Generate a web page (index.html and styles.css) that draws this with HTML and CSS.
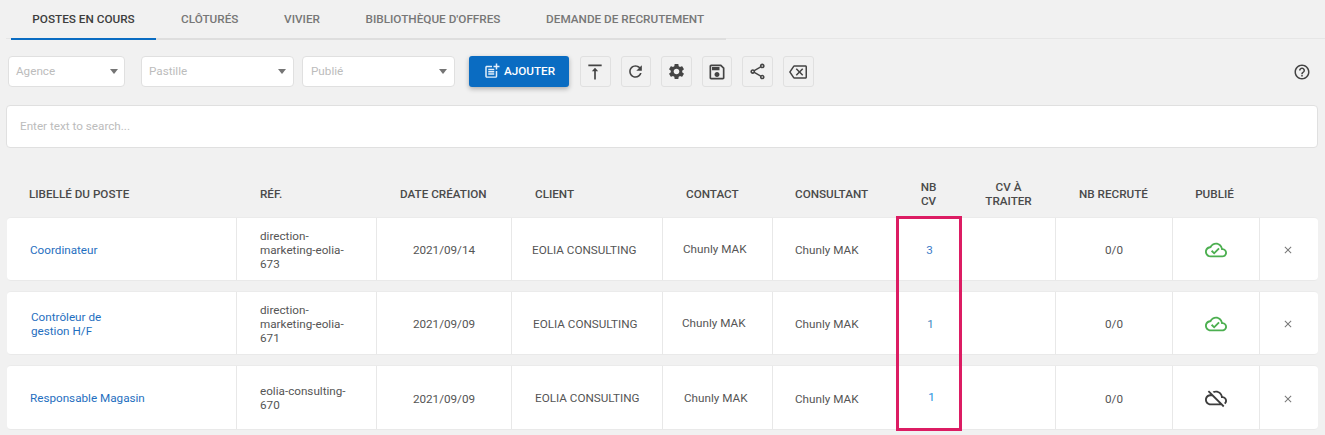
FILE: index.html
```html
<!DOCTYPE html>
<html lang="fr">
<head>
<meta charset="utf-8">
<title>Postes en cours</title>
<link rel="stylesheet" href="styles.css">
</head>
<body>
<nav class="tabs">
  <a class="tab tab-active">Postes en cours</a>
  <a class="tab">Clôturés</a>
  <a class="tab">Vivier</a>
  <a class="tab">Bibliothèque d'offres</a>
  <a class="tab">Demande de recrutement</a>
</nav>

<div class="toolbar">
  <div class="select select-agence"><span>Agence</span><i class="caret"></i></div>
  <div class="select select-pastille"><span>Pastille</span><i class="caret"></i></div>
  <div class="select select-publie"><span>Publié</span><i class="caret"></i></div>
  <button class="add">
    <svg class="add-icon" viewBox="0 0 24 24"><path d="M17 19.22H5V7h7V5H5c-1.1 0-2 .9-2 2v12c0 1.1.9 2 2 2h12c1.1 0 2-.9 2-2v-7h-2v7.22zM19 2h-2v3h-3c.01.01 0 2 0 2h3v2.99c.01.01 2 0 2 0V7h3V5h-3V2zM7 9h8v2H7zm0 3v2h8v-2h-3zm0 3h8v2H7z"/></svg>
    Ajouter
  </button>
  <div class="icon-buttons">
    <button class="icon-btn"><svg class="icon-lg" viewBox="0 0 24 24"><path d="M4 3h16v2H4zM12 7l-3.8 4h2.8v10h2V11h2.8z"/></svg></button>
    <button class="icon-btn"><svg viewBox="0 0 24 24"><path d="M17.65 6.35C16.2 4.9 14.21 4 12 4c-4.42 0-7.99 3.58-7.99 8s3.57 8 7.99 8c3.73 0 6.84-2.55 7.73-6h-2.08c-.82 2.33-3.04 4-5.65 4-3.31 0-6-2.69-6-6s2.69-6 6-6c1.66 0 3.14.69 4.22 1.78L13 11h7V4l-2.35 2.35z"/></svg></button>
    <button class="icon-btn"><svg viewBox="0 0 24 24"><path d="M19.14 12.94c.04-.3.06-.61.06-.94 0-.32-.02-.64-.07-.94l2.03-1.58c.18-.14.23-.41.12-.61l-1.92-3.32c-.12-.22-.37-.29-.59-.22l-2.39.96c-.5-.38-1.03-.7-1.62-.94l-.36-2.54c-.04-.24-.24-.41-.48-.41h-3.84c-.24 0-.43.17-.47.41l-.36 2.54c-.59.24-1.13.57-1.62.94l-2.39-.96c-.22-.08-.47 0-.59.22L2.74 8.87c-.12.21-.08.47.12.61l2.03 1.58c-.05.3-.09.63-.09.94s.02.64.07.94l-2.03 1.58c-.18.14-.23.41-.12.61l1.92 3.32c.12.22.37.29.59.22l2.39-.96c.5.38 1.03.7 1.62.94l.36 2.54c.05.24.24.41.48.41h3.84c.24 0 .44-.17.47-.41l.36-2.54c.59-.24 1.13-.56 1.62-.94l2.39.96c.22.08.47 0 .59-.22l1.92-3.32c.12-.22.07-.47-.12-.61l-2.01-1.58zM12 15.6c-1.98 0-3.6-1.62-3.6-3.6s1.62-3.6 3.6-3.6 3.6 1.62 3.6 3.6-1.62 3.6-3.6 3.6z"/></svg></button>
    <button class="icon-btn"><svg class="icon-lg" viewBox="0 0 24 24"><path d="M17 3H5c-1.11 0-2 .9-2 2v14c0 1.1.89 2 2 2h14c1.1 0 2-.9 2-2V7l-4-4zm2 16H5V5h11.17L19 7.83V19zm-7-7c-1.66 0-3 1.34-3 3s1.34 3 3 3 3-1.34 3-3-1.34-3-3-3zM6 6h9v4H6z"/></svg></button>
    <button class="icon-btn"><svg viewBox="0 0 24 24"><path d="M18 16.08c-.76 0-1.44.3-1.96.77L8.91 12.7c.05-.23.09-.46.09-.7s-.04-.47-.09-.7l7.05-4.11c.54.5 1.25.81 2.04.81 1.66 0 3-1.34 3-3s-1.34-3-3-3-3 1.34-3 3c0 .24.04.47.09.7L8.04 9.81C7.5 9.31 6.79 9 6 9c-1.66 0-3 1.34-3 3s1.34 3 3 3c.79 0 1.5-.31 2.04-.81l7.12 4.16c-.05.21-.08.43-.08.65 0 1.61 1.31 2.92 2.92 2.92s2.92-1.31 2.92-2.92-1.31-2.92-2.92-2.92zM18 4c.55 0 1 .45 1 1s-.45 1-1 1-1-.45-1-1 .45-1 1-1zM6 13c-.55 0-1-.45-1-1s.45-1 1-1 1 .45 1 1-.45 1-1 1zm12 7.02c-.55 0-1-.45-1-1s.45-1 1-1 1 .45 1 1-.45 1-1 1z"/></svg></button>
    <button class="icon-btn"><svg class="icon-sm" viewBox="0 0 24 24"><path d="M22 3H7c-.69 0-1.23.35-1.59.88L0 12l5.41 8.11c.36.53.9.89 1.59.89h15c1.1 0 2-.9 2-2V5c0-1.1-.9-2-2-2zm0 16H7.07L2.4 12l4.66-7H22v14zm-11.59-2L14 13.41 17.59 17 19 15.59 15.41 12 19 8.41 17.59 7 14 10.59 10.41 7 9 8.41 12.59 12 9 15.59z"/></svg></button>
  </div>
  <svg class="help" viewBox="0 0 24 24"><path d="M11 18h2v-2h-2v2zm1-16C6.48 2 2 6.48 2 12s4.48 10 10 10 10-4.48 10-10S17.52 2 12 2zm0 18c-4.41 0-8-3.59-8-8s3.59-8 8-8 8 3.59 8 8-3.59 8-8 8zm0-14c-2.21 0-4 1.79-4 4h2c0-1.1.9-2 2-2s2 .9 2 2c0 2-3 1.75-3 5h2c0-2.25 3-2.5 3-5 0-2.21-1.79-4-4-4z"/></svg>
</div>

<div class="search">Enter text to search...</div>

<section class="table">
  <div class="head">
    <div class="c-title">Libellé du poste</div>
    <div class="c-ref">Réf.</div>
    <div class="c-date">Date création</div>
    <div class="c-client head-client">Client</div>
    <div class="c-contact head-contact">Contact</div>
    <div class="c-consultant">Consultant</div>
    <div class="c-center head-nb">NB<br>CV</div>
    <div class="c-center">CV à<br>traiter</div>
    <div class="c-center head-rec">NB recruté</div>
    <div class="c-center head-pub">Publié</div>
    <div></div>
  </div>

  <div class="row row-a">
    <div class="cell c-title"><a class="link">Coordinateur</a></div>
    <div class="cell c-ref">direction-<br>marketing-eolia-<br>673</div>
    <div class="cell c-date">2021/09/14</div>
    <div class="cell c-client">EOLIA CONSULTING</div>
    <div class="cell c-contact">Chunly MAK</div>
    <div class="cell c-consultant">Chunly MAK</div>
    <div class="cell c-center"><a class="count count-a">3</a></div>
    <div class="cell c-center"></div>
    <div class="cell c-center c-rec">0/0</div>
    <div class="cell c-center"><svg class="cloud cloud-on" viewBox="0 0 24 24"><path d="M19.35 10.04C18.67 6.59 15.64 4 12 4 9.11 4 6.6 5.64 5.35 8.04 2.34 8.36 0 10.91 0 14c0 3.31 2.69 6 6 6h13c2.76 0 5-2.24 5-5 0-2.64-2.05-4.78-4.65-4.96zM19 18H6c-2.21 0-4-1.79-4-4 0-2.05 1.53-3.76 3.56-3.97l1.07-.11.5-.95C8.08 7.14 9.94 6 12 6c2.62 0 4.88 1.86 5.39 4.43l.3 1.5 1.53.11c1.56.1 2.78 1.41 2.78 2.96 0 1.65-1.35 3-3 3zm-9-3.82l-2.09-2.09L6.5 13.5 10 17l6.01-6.01-1.41-1.41z"/></svg></div>
    <div class="cell c-center c-del"><svg class="close" viewBox="0 0 24 24"><path d="M19 6.41L17.59 5 12 10.59 6.41 5 5 6.41 10.59 12 5 17.59 6.41 19 12 13.41 17.59 19 19 17.59 13.41 12z"/></svg></div>
  </div>

  <div class="row row-b">
    <div class="cell c-title"><a class="link">Contrôleur de<br>gestion H/F</a></div>
    <div class="cell c-ref">direction-<br>marketing-eolia-<br>671</div>
    <div class="cell c-date">2021/09/09</div>
    <div class="cell c-client">EOLIA CONSULTING</div>
    <div class="cell c-contact">Chunly MAK</div>
    <div class="cell c-consultant">Chunly MAK</div>
    <div class="cell c-center"><a class="count count-b">1</a></div>
    <div class="cell c-center"></div>
    <div class="cell c-center c-rec">0/0</div>
    <div class="cell c-center"><svg class="cloud cloud-on" viewBox="0 0 24 24"><path d="M19.35 10.04C18.67 6.59 15.64 4 12 4 9.11 4 6.6 5.64 5.35 8.04 2.34 8.36 0 10.91 0 14c0 3.31 2.69 6 6 6h13c2.76 0 5-2.24 5-5 0-2.64-2.05-4.78-4.65-4.96zM19 18H6c-2.21 0-4-1.79-4-4 0-2.05 1.53-3.76 3.56-3.97l1.07-.11.5-.95C8.08 7.14 9.94 6 12 6c2.62 0 4.88 1.86 5.39 4.43l.3 1.5 1.53.11c1.56.1 2.78 1.41 2.78 2.96 0 1.65-1.35 3-3 3zm-9-3.82l-2.09-2.09L6.5 13.5 10 17l6.01-6.01-1.41-1.41z"/></svg></div>
    <div class="cell c-center c-del"><svg class="close" viewBox="0 0 24 24"><path d="M19 6.41L17.59 5 12 10.59 6.41 5 5 6.41 10.59 12 5 17.59 6.41 19 12 13.41 17.59 19 19 17.59 13.41 12z"/></svg></div>
  </div>

  <div class="row row-c">
    <div class="cell c-title"><a class="link">Responsable Magasin</a></div>
    <div class="cell c-ref">eolia-consulting-<br>670</div>
    <div class="cell c-date">2021/09/09</div>
    <div class="cell c-client">EOLIA CONSULTING</div>
    <div class="cell c-contact">Chunly MAK</div>
    <div class="cell c-consultant">Chunly MAK</div>
    <div class="cell c-center"><a class="count count-c">1</a></div>
    <div class="cell c-center"></div>
    <div class="cell c-center c-rec">0/0</div>
    <div class="cell c-center"><svg class="cloud cloud-off" viewBox="0 0 24 24"><path d="M24 15c0-2.64-2.05-4.78-4.65-4.96C18.67 6.59 15.64 4 12 4c-1.33 0-2.57.36-3.65.97l1.49 1.49C10.51 6.17 11.23 6 12 6c3.04 0 5.5 2.46 5.5 5.5v.5H19c1.66 0 3 1.34 3 3 0 .99-.48 1.85-1.21 2.4l1.41 1.41c1.09-.92 1.8-2.27 1.8-3.81zM4.41 3.86L3 5.27l2.77 2.77h-.42C2.34 8.36 0 10.91 0 14c0 3.31 2.69 6 6 6h11.73l2 2 1.41-1.41L4.41 3.86zM6 18c-2.21 0-4-1.79-4-4s1.79-4 4-4h1.73l8 8H6z"/></svg></div>
    <div class="cell c-center c-del"><svg class="close" viewBox="0 0 24 24"><path d="M19 6.41L17.59 5 12 10.59 6.41 5 5 6.41 10.59 12 5 17.59 6.41 19 12 13.41 17.59 19 19 17.59 13.41 12z"/></svg></div>
  </div>

  <div class="highlight"></div>
</section>
</body>
</html>
```

FILE: styles.css
```css
* { box-sizing: border-box; }

html, body {
  margin: 0;
  height: 435px;
  overflow: hidden;
}

body {
  background: #f1f1f1;
  font-family: Roboto, "Liberation Sans", sans-serif;
  font-size: 11.7px;
  line-height: 14px;
  color: #555;
}

/* Tabs */
.tabs {
  display: flex;
  height: 39px;
  margin-left: 6px;
  padding-left: 5px;
  border-bottom: 1px solid #e6e6e6;
}

.tab {
  display: flex;
  align-items: center;
  height: 40px;
  padding: 0 22.8px;
  font-size: 11.75px;
  font-weight: 500;
  text-transform: uppercase;
  color: #777;
  border-bottom: 2px solid #dedede;
}

.tab-active {
  padding: 0 21.3px;
  color: #3d3d3d;
  border-bottom-color: #0a6cc2;
}

.tab:nth-child(2) { padding-left: 25px; }
.tab:last-child { padding-right: 22px; }

/* Toolbar */
.toolbar {
  display: flex;
  align-items: center;
  height: 31px;
  margin-top: 17px;
  padding-left: 8px;
  padding-right: 14px;
}

.select {
  display: flex;
  align-items: center;
  justify-content: space-between;
  height: 31px;
  padding: 0 7px 2px 7px;
  background: #fff;
  border: 1px solid #e0e0e0;
  border-radius: 4px;
  color: #bcbcbc;
}

.select-agence { width: 117px; margin-right: 16px; padding-right: 6px; }
.select-pastille { width: 153px; margin-right: 8px; }
.select-publie { width: 153px; margin-right: 14px; padding-left: 8px; }

.caret {
  width: 0;
  height: 0;
  margin-top: 2px;
  border-left: 4.5px solid transparent;
  border-right: 4.5px solid transparent;
  border-top: 5px solid #757575;
}

.add {
  display: flex;
  align-items: center;
  gap: 3px;
  width: 100px;
  height: 31px;
  margin-right: 11px;
  padding: 0 0 2px 14px;
  border: 0;
  border-radius: 3px;
  background: #0a6cc2;
  box-shadow: 0 2px 5px rgba(0, 0, 0, .28);
  color: #fff;
  font: 500 11.7px/14px Roboto, "Liberation Sans", sans-serif;
  text-transform: uppercase;
}

.add-icon {
  width: 18px;
  height: 18px;
  fill: #e4effa;
}

.icon-buttons {
  display: flex;
  gap: 10px;
}

.icon-btn {
  display: flex;
  align-items: center;
  justify-content: center;
  width: 30.6px;
  height: 31px;
  padding: 0;
  background: transparent;
  border: 1px solid #e0e0e0;
  border-radius: 3px;
}

.icon-btn svg {
  width: 19px;
  height: 19px;
  fill: #444;
}

.icon-btn .icon-lg {
  width: 20px;
  height: 20px;
}

.icon-btn .icon-sm {
  width: 18px;
  height: 18px;
}

.help {
  width: 18px;
  height: 18px;
  margin-left: auto;
  fill: #444;
}

/* Search */
.search {
  display: flex;
  align-items: center;
  height: 43px;
  margin: 18px 7px 0 6px;
  padding: 0 0 1px 13px;
  background: #fff;
  border: 1px solid #e0e0e0;
  border-radius: 4px;
  color: #bcbcbc;
}

/* Table */
.table {
  position: relative;
  margin: 21px 7px 0;
}

.head,
.row {
  display: grid;
  grid-template-columns: 230px 140px 135px 151px 110px 124px 64px 95px 117px 87px 58px;
}

.head {
  height: 48px;
  padding-top: 2px;
  align-items: center;
  font-weight: 500;
  text-transform: uppercase;
  color: #4a4a4a;
}

.head .c-title { padding-left: 22px; }
.head .c-date { padding-left: 23px; text-align: left; }
.head-client { padding-left: 23px; }
.head .head-contact { padding-left: 23px; }
.head-nb { padding-right: 1px; }
.head-rec { padding-right: 2px; }
.head-pub { padding-right: 4px; }

.row {
  height: 64px;
  margin-bottom: 10px;
  background: #fff;
  border-top: 1px solid #ebebeb;
  border-bottom: 1px solid #e9e9e9;
  border-radius: 4px;
}

.row-c { height: 65px; margin-bottom: 0; }

.cell {
  display: flex;
  align-items: center;
  padding-top: 2px;
  border-right: 1px solid #e8e8e8;
}

.cell:last-child { border-right: 0; }

.c-title { padding-left: 23px; }
.c-ref { padding-left: 23px; }
.c-date { justify-content: center; text-align: center; }
.c-contact { padding-left: 20px; }
.c-consultant { padding-left: 22px; }
.c-center { justify-content: center; text-align: center; }
.c-del { padding-right: 2px; }

.row-a .c-client { padding-left: 20px; padding-bottom: 1px; }
.row-b .c-client { padding-left: 21px; padding-bottom: 1px; }
.row-c .c-client { padding-left: 23px; padding-bottom: 1px; }

.row-a .c-contact { padding-bottom: 3px; }
.row-b .c-contact { padding-left: 19px; padding-bottom: 3px; }
.row-c .c-contact { padding-left: 21px; padding-bottom: 1px; }

.row-a .c-title { padding-bottom: 1px; }
.row-b .c-title { padding-left: 24px; }
.row-b .c-ref { padding-bottom: 1px; }
.row-c .c-title { padding-bottom: 1px; }
.row-c .c-ref { padding-bottom: 2px; }

.link {
  color: #1f6fc0;
}

.count {
  position: relative;
  left: 1px;
}

.count-a { color: #3b7cc9; }
.count-b { color: #3f86c0; left: 2px; }
.count-c { color: #1f8fe0; left: 3px; padding-bottom: 3px; }

.cloud {
  width: 22px;
  height: 22px;
  margin-bottom: 1px;
}

.cloud-on { fill: #4caf50; }
.cloud-off { fill: #3d3d3d; }

.close {
  width: 12px;
  height: 12px;
  fill: #777;
}

/* Red annotation drawn over the NB CV column */
.highlight {
  position: absolute;
  left: 889px;
  top: 47px;
  width: 66px;
  height: 215px;
  border: 3px solid #dc1c63;
}
```
